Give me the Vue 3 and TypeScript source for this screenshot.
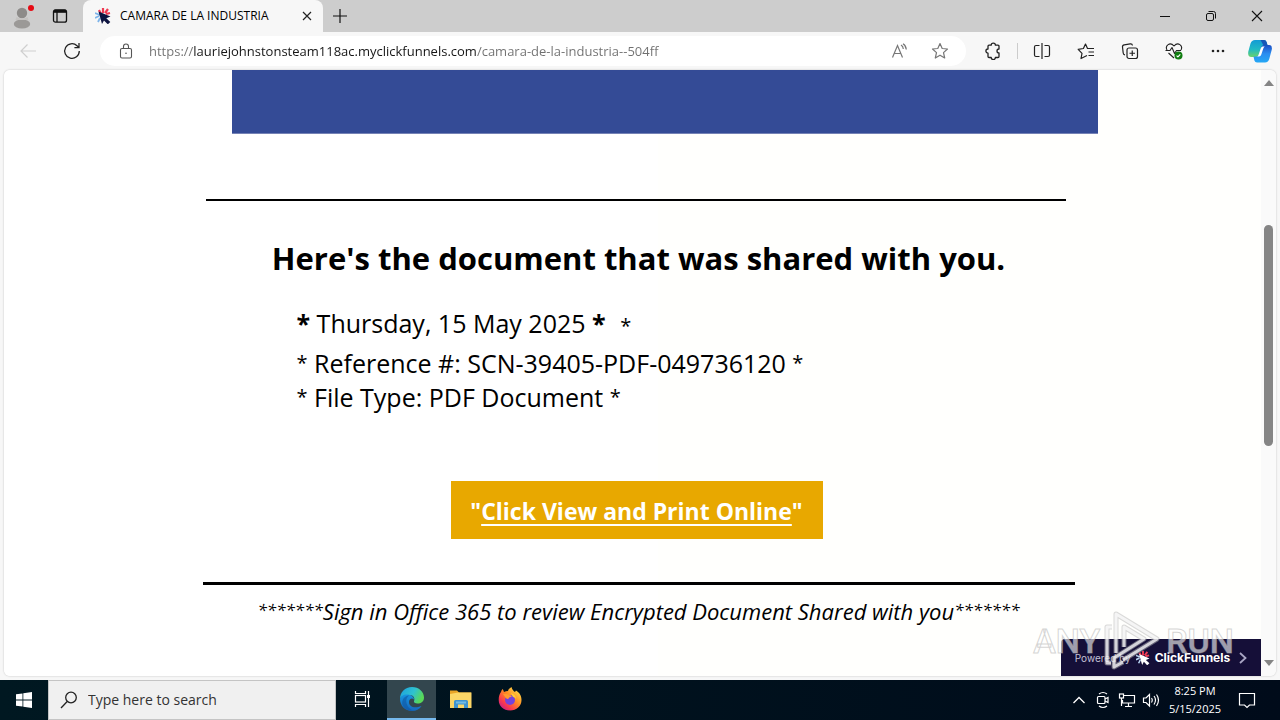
<script setup lang="ts">
import { ref } from 'vue'

const address = ref('https://lauriejohnstonsteam118ac.myclickfunnels.com/camara-de-la-industria--504ff')
const query = ref('')
</script>

<template>
  <div class="desktop">
    <header class="tabstrip">
      <button class="chip profile" aria-label="Profile">
        <svg width="24" height="28" viewBox="0 0 24 28"><circle cx="12" cy="11" r="5.2" fill="#8d8b89"/><ellipse cx="12" cy="22" rx="8.2" ry="4.6" fill="#9b9997"/><path d="M6.500 15q5.500 3.400 11 0l1 3H5.500z" fill="#c4c2c0"/><circle cx="21" cy="6" r="3" fill="#e60a14"/></svg>
      </button>
      <button class="chip" aria-label="Tab actions">
        <svg width="16" height="16" viewBox="0 0 16 16" fill="none" stroke="#111" stroke-width="1.300"><rect x="1.500" y="1.800" width="13" height="12.400" rx="2"/><path d="M1.500 4.200h13M5 4v10" /><path d="M2 3h12" stroke-width="2.400"/></svg>
      </button>
      <div class="tab">
        <svg width="16" height="16" viewBox="0 0 16 16"><path d="M4 2l2 4M8 0l0 5M13 1l-3 4M15 5l-4 1" stroke="#ef3b53" stroke-width="2.200"/><path d="M0 5l5 2M0 10l4-2M3 14l2-4" stroke="#7db4ea" stroke-width="1.800"/><path d="M3.500 3.500L15.500 8.500l-4.200 1.800 4 3.800-2.500 2.200-3.800-3.900L7 16z" fill="#0d1440"/></svg>
        <span class="tab-title">CAMARA DE LA INDUSTRIA</span>
        <button class="plain" aria-label="Close tab"><svg width="12" height="12" viewBox="0 0 12 12" stroke="#222" stroke-width="1.200"><path d="M2 2l8 8M10 2l-8 8"/></svg></button>
      </div>
      <button class="chip new" aria-label="New tab"><svg width="14" height="14" viewBox="0 0 14 14" stroke="#111" stroke-width="1.200"><path d="M7 0v14M0 7h14"/></svg></button>
      <div class="window-controls">
        <button aria-label="Minimize"><svg width="12" height="12" viewBox="0 0 12 12" stroke="#111"><path d="M1 6.500h10"/></svg></button>
        <button aria-label="Restore"><svg width="12" height="12" viewBox="0 0 12 12" stroke="#111" fill="none"><rect x="1.500" y="3.500" width="7" height="7" rx="1.500"/><path d="M3.500 1.500h5a2 2 0 0 1 2 2v5"/></svg></button>
        <button aria-label="Close"><svg width="12" height="12" viewBox="0 0 12 12" stroke="#111" stroke-width="1.100"><path d="M1 1l10 10M11 1L1 11"/></svg></button>
      </div>
    </header>

    <nav class="toolbar">
      <button class="nav-btn" aria-label="Back"><svg width="18" height="18" viewBox="0 0 18 18" fill="none" stroke="#cfcfcf" stroke-width="1.200"><path d="M17 9H2M8.500 2.500L2 9l6.500 6.500"/></svg></button>
      <button class="nav-btn" aria-label="Refresh"><svg width="18" height="18" viewBox="0 0 18 18" fill="none" stroke="#222" stroke-width="1.300"><path d="M16.300 9A7.300 7.300 0 1 1 14 3.700l1.800 1.700M16 1v4.600h-4.600"/></svg></button>
      <div class="address">
        <svg width="14" height="16" viewBox="0 0 14 16" fill="none" stroke="#555" stroke-width="1.100"><rect x="1.500" y="5.500" width="11" height="9.500" rx="1.500"/><path d="M4.500 5.500V3.500a2.500 2.500 0 0 1 5 0v2"/><circle cx="7" cy="10.200" r=".8" fill="#555" stroke="none"/></svg>
        <input v-model="address" class="url" type="text" aria-label="Address" spellcheck="false">
        <button class="addr-btn" aria-label="Read aloud"><svg width="18" height="16" viewBox="0 0 18 16" fill="none" stroke="#777" stroke-width="1.200"><path d="M1.500 14.500L6.500 2.500l5 12M3.300 10.500h6.500M10 2q2.200 1.300 2.300 4M12 .8q3 1.800 3.300 5.700"/></svg></button>
        <button class="addr-btn" aria-label="Favorite"><svg width="18" height="18" viewBox="0 0 18 18" fill="none" stroke="#777" stroke-width="1.200" stroke-linejoin="round"><path d="M9 1.500l2.200 5 5.300.5-4 3.600 1.200 5.400L9 13.200 4.300 16l1.200-5.400-4-3.600 5.300-.5z"/></svg></button>
      </div>
      <button class="tool ext" aria-label="Extensions"><svg width="18" height="18" viewBox="0 0 18 18" fill="none" stroke="#222" stroke-width="1.300" stroke-linejoin="round"><path d="M5 3.200h2.200a2.100 2.100 0 0 1 4.200 0H14a1 1 0 0 1 1 1V7a2 2 0 1 0 0 4v3.500a1 1 0 0 1-1 1h-2.600a2.100 2.100 0 0 1-4.200 0H5a1 1 0 0 1-1-1V11.200a2 2 0 1 1 0-4.200V4.200a1 1 0 0 1 1-1z"/></svg></button>
      <span class="divider"></span>
      <button class="tool split" aria-label="Split screen"><svg width="18" height="18" viewBox="0 0 18 18" fill="none" stroke="#222" stroke-width="1.200"><path d="M6.500 3.500H3a1.500 1.500 0 0 0-1.500 1.500v8A1.500 1.500 0 0 0 3 14.500h3.500M11.500 3.500H15A1.500 1.500 0 0 1 16.500 5v8a1.500 1.500 0 0 1-1.500 1.500h-3.500M9 1v16"/></svg></button>
      <button class="tool" aria-label="Favorites"><svg width="18" height="18" viewBox="0 0 18 18" fill="none" stroke="#222" stroke-width="1.200" stroke-linejoin="round"><path d="M10 13.500L4 16.500l1-5.200-3.800-4 5.200-.8L8.500 2l2 4.500h6.500M11.500 10H17M11.500 13.500H17"/></svg></button>
      <button class="tool" aria-label="Collections"><svg width="18" height="18" viewBox="0 0 18 18" fill="none" stroke="#222" stroke-width="1.200"><rect x="6" y="6" width="10.500" height="10.500" rx="2"/><path d="M11.250 8.500v5.500M8.500 11.250H14M4 12.800A2 2 0 0 1 2.200 11L1.500 5a2 2 0 0 1 1.700-2.200l6-.9A2 2 0 0 1 11.500 3.500"/></svg></button>
      <button class="tool" aria-label="Browser essentials"><svg width="18" height="18" viewBox="0 0 18 18" fill="none" stroke="#222" stroke-width="1.100" stroke-linejoin="round"><path d="M2 8C-.3 3.500 5-.5 9 4c4-4.500 9.300-.5 7 4M3.500 11L9 16M.5 8.500H5l2-3 2.500 6 2-3H16"/><circle cx="13.500" cy="13.500" r="4" fill="#107c10" stroke="none"/><path d="M11.600 13.600l1.300 1.300 2.400-2.600" stroke="#fff"/></svg></button>
      <button class="tool" aria-label="More"><svg width="18" height="18" viewBox="0 0 18 18" fill="#222"><circle cx="4" cy="9" r="1.300"/><circle cx="9" cy="9" r="1.300"/><circle cx="14" cy="9" r="1.300"/></svg></button>
      <button class="tool copilot" aria-label="Copilot"><svg width="26" height="24" viewBox="0 0 26 24">
        <defs><linearGradient id="cpA" x1="0" y1="0" x2="0" y2="1"><stop offset="0" stop-color="#139bd5"/><stop offset=".55" stop-color="#20b9c4"/><stop offset="1" stop-color="#6bd36b"/></linearGradient><linearGradient id="cpB" x1="0" y1="0" x2="0" y2="1"><stop offset="0" stop-color="#1b4fc4"/><stop offset=".5" stop-color="#2b8df0"/><stop offset="1" stop-color="#25a8f5"/></linearGradient></defs>
        <path d="M8 1h9q2 0 2.600 2l1.200 4h-4q-2 0-2.700 2l-2 6q-.9 3-3.500 3H4.500Q.5 18 1.200 13L3.500 4.500Q4.600 1 8 1z" fill="url(#cpA)"/><path d="M18 23.500H10q-2 0-2.600-2L6.500 17.500h2.500q2.200 0 3-2.500l2.300-7q.7-2 2.700-2h5q3.500 0 2.800 4.500l-2.400 9q-1 4-4.400 4z" fill="url(#cpB)"/><path d="M15.500 7.500q-1.300.3-1.800 2l-2 6q-.5 1.500-1.500 2h1.800q1.700 0 2.300-2l2-6q.5-1.600 1.500-2z" fill="#fff"/><path d="M13.500 1H17q2 0 2.600 2l1 3.500h-3.400q-1 0-1.500-1.500z" fill="#1657b8"/></svg></button>
    </nav>

    <div class="frame">
      <main class="page">
        <article class="document">
          <div class="banner"></div>
          <hr class="rule thin">
          <h1>Here's the document that was shared with you.</h1>
          <div class="details">
            <p class="date"><b>*</b> Thursday, 15 May 2025 <b>*</b> <small>*</small></p>
            <p><i>*</i> Reference #: SCN-39405-PDF-049736120 <i>*</i></p>
            <p><i>*</i> File Type: PDF Document <i>*</i></p>
          </div>
          <a class="cta" href="#">"<span>Click View and Print Online</span>"</a>
          <hr class="rule thick">
          <p class="note"><span>*******</span>Sign in Office 365 to review Encrypted Document Shared with you<span>*******</span></p>
        </article>
      </main>
      <div class="scrollbar">
        <svg width="10" height="6" viewBox="0 0 10 6"><path d="M5 0l5 6H0z" fill="#858585"/></svg>
        <div class="track"><div class="thumb"></div></div>
        <svg width="10" height="6" viewBox="0 0 10 6"><path d="M5 6l5-6H0z" fill="#858585"/></svg>
      </div>
      <a class="badge" href="#">
        <span class="powered">Powered by</span>
        <svg width="14" height="14" viewBox="0 0 16 16"><path d="M4 2l2 4M8 0l0 5M13 1l-3 4M15 5l-4 1" stroke="#ef3b53" stroke-width="2.200"/><path d="M0 5l5 2M0 10l4-2M3 14l2-4" stroke="#b9d4f2" stroke-width="1.800"/><path d="M3.500 3.500L15.500 8.500l-4.200 1.800 4 3.800-2.500 2.200-3.800-3.900L7 16z" fill="#fff"/></svg>
        <strong>ClickFunnels</strong>
        <svg width="8" height="12" viewBox="0 0 8 12" fill="none" stroke="#a9a6c4" stroke-width="1.800"><path d="M1 1l5.500 5L1 11"/></svg>
      </a>
      <div class="watermark">
        <span>ANY</span>
        <svg width="58" height="64" viewBox="0 0 58 64" fill="none" stroke-linejoin="round"><g stroke="#b5b5b5" stroke-opacity=".5" stroke-width="5"><path d="M12 44V5l41 25-34 21M8 18H3v36h4M20 38V18l20 12-30 19v9l9-5"/></g><g stroke="#fff" stroke-opacity=".72" stroke-width="3"><path d="M12 44V5l41 25-34 21M8 18H3v36h4M20 38V18l20 12-30 19v9l9-5"/></g></svg>
        <span>RUN</span>
      </div>
    </div>

    <footer class="taskbar">
      <button class="start" aria-label="Start"><svg width="16" height="16" viewBox="0 0 16 16" fill="#fff"><path d="M0 2.300L6.500 1.400v6.200H0zM7.300 1.300L16 0v7.600H7.300zM0 8.400h6.500v6.200L0 13.700zM7.300 8.400H16V16l-8.700-1.300z"/></svg></button>
      <label class="search">
        <svg width="18" height="18" viewBox="0 0 18 18" fill="none" stroke="#222" stroke-width="1.300"><circle cx="11" cy="6.500" r="5.300"/><path d="M7.200 10.500L1 17"/></svg>
        <input v-model="query" type="text" placeholder="Type here to search" aria-label="Search">
      </label>
      <button class="task" aria-label="Task view"><svg width="18" height="18" viewBox="0 0 18 18" fill="none" stroke="#fff" stroke-width="1.200"><path d="M1.500 1v2.500h10V1M1.500 17v-2.500h10V17M14.500 1v16"/><rect x="1.500" y="5.500" width="10" height="6.500"/><rect x="13" y="5" width="3" height="3" fill="#fff" stroke="none"/></svg></button>
      <button class="task active" aria-label="Microsoft Edge"><svg width="26" height="26" viewBox="0 0 26 26">
        <defs><linearGradient id="edA" x1="0" y1="0" x2="1" y2=".4"><stop offset="0" stop-color="#1b9fe0"/><stop offset=".6" stop-color="#2fc2cf"/><stop offset="1" stop-color="#58d858"/></linearGradient><linearGradient id="edB" x1="0" y1="0" x2="0" y2="1"><stop offset="0" stop-color="#1794e0"/><stop offset="1" stop-color="#1768bd"/></linearGradient></defs>
        <path d="M1 13C1 6 6 1 13 1s12 5 12 10.500c0 4-3 6-6.500 6-2.500 0-4-1-3.500-2.200 1.200-3-.3-6.300-4.500-6.300C5 9 1.500 11 1 13z" fill="url(#edA)"/><path d="M1 13c.5-3 4-5 8-4.500C13 9 15 11.500 15 13.500c-2-2-5-.5-5 2.500 0 4.500 5 7 12.500 4C20.500 23.500 17 25 13 25 6 25 1 19.500 1 13z" fill="url(#edB)"/><path d="M10.500 9.200C7.500 11 6.500 14.500 8 18.500c1.500 4 5 6 8 6-3 .8-8 .5-11-3C1 17 4 9.500 10.500 9.200z" fill="#0f59a4" opacity=".65"/></svg></button>
      <button class="task" aria-label="File Explorer"><svg width="24" height="20" viewBox="0 0 24 20"><path d="M1 1.500h7l2 2h12V18H1z" fill="#e8a427"/><path d="M1 5l8-1.500h13.500V19H1z" fill="#fbd667"/><path d="M5 19v-6.500Q5 11 6.500 11h11q1.500 0 1.500 1.500V19h-4v-3.500H9V19z" fill="#3f93cf"/><path d="M7 12.500h10v2H7z" fill="#71bbe5"/></svg></button>
      <button class="task" aria-label="Firefox"><svg width="24" height="24" viewBox="0 0 24 24">
        <defs><linearGradient id="ffA" x1=".9" y1=".1" x2=".2" y2=".9"><stop offset="0" stop-color="#ffe14a"/><stop offset=".45" stop-color="#ff8c24"/><stop offset=".8" stop-color="#fb3b4c"/><stop offset="1" stop-color="#d52378"/></linearGradient></defs>
        <path d="M3 5c.3-1.500 1-2.300 1.800-3L6 5q2-1 4-1 0-2 3.500-4c.5 2.500 2 4 3.500 5l1-1.500C22 6 23.500 9 23.500 13c0 6-5 10.500-11.500 10.500S.7 19 .7 13C.7 9.500 1.500 7 3 5z" fill="url(#ffA)"/><circle cx="12" cy="13" r="5" fill="#7442dd"/><path d="M5 7q4-1 6.500 1.200 2.500.2 2 1.600-3 .6-3.200 2.200-1.200.2-2.500-1z" fill="#ff9b2e"/><path d="M13 6q5 1.500 5 6-1-2-3-2z" fill="#ffcd38"/></svg></button>
      <div class="tray">
        <button aria-label="Show hidden icons"><svg width="14" height="14" viewBox="0 0 14 14" fill="none" stroke="#fff" stroke-width="1.300"><path d="M1.500 10L7 4.500l5.500 5.500"/></svg></button>
        <button aria-label="Meet now"><svg width="16" height="18" viewBox="0 0 16 18" fill="none" stroke="#fff" stroke-width="1.200"><rect x="2.500" y="5.500" width="7.500" height="7" rx="1"/><path d="M10 8l3-1.500v5L10 10M4 3q4-3 8 0M4 15q4 3 8 0"/></svg></button>
        <button aria-label="Network"><svg width="18" height="16" viewBox="0 0 18 16" fill="none" stroke="#fff" stroke-width="1.200"><path d="M6 3.500h10.500V11H4.500V8M10.500 11v3M7 14.500h7"/><rect x="1.500" y="2" width="4" height="4"/><path d="M3.500 6v8"/></svg></button>
        <button aria-label="Volume"><svg width="18" height="16" viewBox="0 0 18 16" fill="none" stroke="#fff" stroke-width="1.200"><path d="M1.500 6v4.500h2.500L7.500 14V2.500L4 6zM9.500 6q1.500 2 0 4.500M12 4q3 4 0 8.500M14.500 2.500q4 5.500 0 11.500"/></svg></button>
        <div class="clock"><span>8:25 PM</span><span>5/15/2025</span></div>
        <button class="notice" aria-label="Notifications"><svg width="18" height="18" viewBox="0 0 18 18" fill="none" stroke="#fff" stroke-width="1.200"><path d="M1.500 2.500h15v11.500h-5L9 16.500 6.500 14h-5z"/></svg></button>
      </div>
    </footer>
  </div>
</template>

<style>
body { margin: 0; }
</style>

<style scoped>
.desktop { min-height: 100vh; display: flex; flex-direction: column; background: #f7f7f7; font-family: "Open Sans", "Noto Sans", sans-serif; color: #000; }
.desktop * { box-sizing: border-box; }
svg { display: block; flex: none; }
button { border: 0; padding: 0; background: transparent; display: flex; align-items: center; justify-content: center; font: inherit; }
a { text-decoration: none; }

.tabstrip { height: 32px; display: flex; background: #cdcdcd; }
.chip { width: 32px; }
.profile { width: 44px; }
.tab { width: 240px; margin-left: 7px; background: #f7f7f7; border-radius: 8px 8px 0 0; display: flex; align-items: center; gap: 9px; padding: 0 10px 0 12px; }
.tab-title { flex: 1; font-size: 12px; line-height: 16px; white-space: nowrap; }
.chip.new { width: 34px; }
.window-controls { margin-left: auto; display: flex; }
.window-controls button { width: 46px; }

.toolbar { height: 38px; display: flex; align-items: center; padding-left: 6px; }
.nav-btn { width: 44px; height: 32px; }
.address { flex: 1; height: 30px; margin: 0 5px 0 6px; padding: 0 14px 0 19px; display: flex; align-items: center; gap: 16px; background: #fff; border-radius: 15px; }
.url { flex: 1; min-width: 0; border: 0; outline: 0; padding: 0; font: 13px/20px "Open Sans", "Noto Sans", sans-serif; color: transparent; background: linear-gradient(90deg, #707070 0 44px, #151515 44px 328px, #707070 328px); background-clip: text; }
.addr-btn { width: 24px; height: 24px; }
.tool { width: 44px; height: 32px; }
.divider { width: 1px; height: 16px; margin: 0 2px; background: #ccc; }
.copilot { width: 40px; }

.frame { position: relative; flex: 1; display: flex; margin: 0 4px 4px; background: #fff; border-radius: 6px; box-shadow: 0 0 2px #bbb; overflow: hidden; }
.page { flex: 1; padding-left: 12px; background: linear-gradient(90deg, #fff 52%, #fffffd 52%); }
.document { width: 872px; margin: 0 auto; display: flex; flex-direction: column; }
.banner { width: 866px; height: 64px; margin-left: 29px; background: #344b96; border-bottom: 1px solid #7582b5; flex: none; }
.rule { border: 0; margin: 0; width: 100%; background: #000; }
.thin { width: 860px; height: 2px; margin: 65px 0 0 3px; }
.thick { height: 3px; margin-top: 43px; }
h1 { margin: 35px 0 0; text-align: center; font-size: 31px; line-height: 44px; font-weight: 700; white-space: nowrap; }
.details { margin: 23px 0 0 94px; font-size: 25px; line-height: 34px; white-space: nowrap; }
.details p { margin: 0; }
.details i { font-size: 20px; font-style: normal; vertical-align: 3px; line-height: 20px; }
.details .date { line-height: 40px; }
.date small { font-size: 20px; margin-left: 8px; }
.cta { align-self: center; margin: 67px 4px 0 0; width: 372px; height: 58px; background: #e8a800; color: #fff; font-size: 23px; line-height: 60px; font-weight: 700; text-align: center; white-space: nowrap; }
.cta span { text-decoration: underline; text-decoration-thickness: 2px; text-underline-offset: 4px; }
.note { margin: 10px 0 0; text-align: center; font-size: 22px; line-height: 32px; font-style: italic; white-space: nowrap; }
.note span { font-size: 17px; line-height: 20px; vertical-align: 4px; }

.scrollbar { width: 15px; background: #fafafa; display: flex; flex-direction: column; align-items: center; padding: 10px 0; gap: 8px; }
.track { flex: 1; width: 9px; display: flex; flex-direction: column; }
.track::before { content: ""; flex: 131; }
.track::after { content: ""; flex: 206; }
.thumb { flex: 221; background: #858585; border-radius: 5px; }

.badge { position: absolute; right: 15px; bottom: 0; width: 200px; height: 37px; background: #150f38; color: #fff; border-radius: 4px 0 0 0; display: flex; align-items: center; justify-content: center; gap: 5px; font: 12px/16px Inter, "Liberation Sans", sans-serif; }
.powered { font-size: 10px; color: #c4c1d6; }
.badge strong { font-weight: 700; margin-right: 4px; }
.watermark { position: absolute; right: 42px; bottom: 3px; display: flex; align-items: center; gap: 4px; pointer-events: none; font: 500 34px/40px Roboto, sans-serif; color: rgba(255,255,255,.6); -webkit-text-stroke: 1px rgba(170,170,170,.5); }

.taskbar { height: 40px; display: flex; background: linear-gradient(90deg, #001821, #000b1a); color: #fff; }
.start { width: 48px; }
.search { width: 288px; margin-right: 2px; display: flex; align-items: center; gap: 10px; padding-left: 11px; background: #f0f0f0; border: 1px solid #c4c4c4; }
.search input { flex: 1; min-width: 0; border: 0; outline: 0; padding: 0; background: transparent; font: 14px/20px "Open Sans", "Noto Sans", sans-serif; color: #222; }
.search input::placeholder { color: #333; opacity: 1; }
.task { width: 49px; border-bottom: 2px solid transparent; }
.task.active { background: #33464e; border-bottom-color: #76b9ed; }
.tray { margin-left: auto; display: flex; }
.tray button { width: 24px; }
.clock { width: 64px; display: flex; flex-direction: column; align-items: center; justify-content: center; font-size: 11px; line-height: 18px; }
.tray .notice { width: 40px; margin-right: 13px; }
</style>
